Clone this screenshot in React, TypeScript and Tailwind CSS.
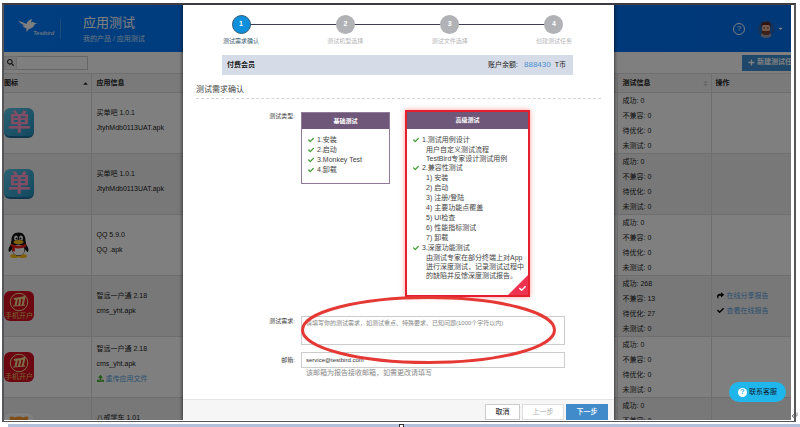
import React, { useState } from "react";
import { FaSearch, FaPlus, FaCheck, FaShare, FaUpload, FaCaretDown, FaCaretUp, FaSort } from "react-icons/fa";

type AppRow = {
  icon: "dan" | "qq" | "cms" | "orange";
  name: string;
  file?: string;
  reupload?: boolean;
  report?: boolean;
  counts: number[];
};

const rows: AppRow[] = [
  { icon: "dan", name: "买单吧 1.0.1", file: "JtyhMdb0113UAT.apk", counts: [0, 0, 0, 0] },
  { icon: "dan", name: "买单吧 1.0.1", file: "JtyhMdb0113UAT.apk", counts: [0, 0, 0, 0] },
  { icon: "qq", name: "QQ 5.9.0", file: "QQ .apk", counts: [0, 0, 0, 0] },
  { icon: "cms", name: "智远一户通 2.18", file: "cms_yht.apk", report: true, counts: [268, 13, 27, 0] },
  { icon: "cms", name: "智远一户通 2.18", file: "cms_yht.apk", reupload: true, counts: [0, 0, 0, 0] },
  { icon: "orange", name: "八戒学车 1.01", counts: [0, 0] },
];

const countLabels = ["成功", "不兼容", "待优化", "未测试"];
const steps = ["测试需求确认", "测试机型选择", "测试文件选择", "创建测试任务"];
const basicItems = ["1.安装", "2.启动", "3.Monkey Test", "4.卸载"];
const compatItems = ["安装", "启动", "注册/登陆", "主要功能点覆盖", "UI检查", "性能指标测试", "卸载"];

const App = () => {
  const [email, setEmail] = useState("service@testbird.com");
  const [demand, setDemand] = useState("");
  const [keyword, setKeyword] = useState("");

  return (
    <div className="flex h-screen flex-col overflow-hidden bg-white pt-[3px] font-['Liberation_Sans','Noto_Sans_CJK_SC',sans-serif] text-[7px] text-[#222]">
      <div className="relative ml-0.5 mr-1 min-h-0 flex-1 border-2 border-b border-[#55555a] border-t-[#3c3c42] pb-px pr-[3px]">
        <div className="relative h-full overflow-hidden bg-white">
          <Header />
          <div className="flex h-[21px] items-center justify-between">
            <label className="flex h-[14px] items-center">
              <span className="flex h-full w-[13px] items-center justify-center border border-[#ddd] bg-[#eee]">
                <FaSearch />
              </span>
              <input
                aria-label="搜索"
                className="h-full w-[71px] border border-l-0 border-[#ccc] px-1"
                value={keyword}
                onChange={(e) => setKeyword(e.target.value)}
              />
            </label>
            <button className="flex h-4 w-[49px] items-center gap-0.5 overflow-hidden whitespace-nowrap bg-[#3d8fd4] pl-1.5 font-bold text-white">
              <FaPlus className="shrink-0" />
              新建测试任务
            </button>
          </div>
          <AppTable />

          <div className="absolute inset-0 bg-black/50" />
          <div className="absolute inset-0 flex justify-center pl-0.5">
            <div role="dialog" aria-label="测试需求确认" className="flex h-full w-[431px] flex-col bg-white shadow-[0_0_3px_1px_rgba(0,0,0,0.5)]">
              <div className="min-h-0 flex-1 pt-2.5">
                <div className="ml-[39px] mr-[41px]">
                  <Steps />
                  <div className="mt-[9px] flex h-5 items-center justify-between bg-[#d6dce7] pl-[5px] pr-[7px]">
                    <strong>付费会员</strong>
                    <span className="flex items-center">
                      账户余额:
                      <span className="ml-1.5 mr-1 text-[8px] text-[#4a8ed0]">888430</span>
                      T币
                    </span>
                  </div>
                </div>
                <h2 className="mx-[13px] flex h-6 items-center border-b border-dashed border-[#d5d5d5] pt-1.5 text-[8px] text-[#444]">测试需求确认</h2>

                <form className="mt-[13px] grid grid-cols-[112px_1fr] gap-x-1.5 pr-[49px]" onSubmit={(e) => e.preventDefault()}>
                  <span className="text-right text-[6px] leading-[8px] text-[#444]">测试类型:</span>
                  <div className="flex items-start gap-[17px]">
                    <BasicCard />
                    <AdvancedCard />
                  </div>

                  <label htmlFor="demand" className="mt-[21px] text-right text-[6px] leading-[10px] text-[#444]">
                    测试需求:
                  </label>
                  <div className="relative mt-[21px]">
                    <textarea
                      id="demand"
                      className="block h-[29px] w-full resize-none border border-[#ccc] px-1 py-0.5 text-[6px] leading-[9px] placeholder:text-[#888]"
                      placeholder="请填写你的测试需求，如测试重点、特殊要求、已知问题(1000个字符以内)"
                      value={demand}
                      onChange={(e) => setDemand(e.target.value)}
                    />
                    <svg className="pointer-events-none absolute -top-5 left-0 h-[68px] w-[255px]" viewBox="0 0 255 68" fill="none">
                      <ellipse cx="127.5" cy="34" rx="126" ry="32.5" stroke="#e53935" strokeWidth="3" />
                    </svg>
                  </div>

                  <label htmlFor="email" className="mt-[7px] text-right text-[6px] leading-4 text-[#444]">
                    邮箱:
                  </label>
                  <div className="mt-[7px]">
                    <input
                      id="email"
                      type="email"
                      className="block h-4 w-full border border-[#ccc] px-1 text-[6px] text-[#333]"
                      value={email}
                      onChange={(e) => setEmail(e.target.value)}
                    />
                    <p className="pl-[5px] leading-[9px] text-[#888]">该邮箱为报告接收邮箱，如需更改请填写</p>
                  </div>
                </form>
              </div>
              <div className="flex h-[21px] shrink-0 items-end justify-end gap-0.5 border-t border-[#e5e5e5] bg-[#f6f6f6] pr-1.5">
                <button className="h-4 w-[35px] border border-[#ccc] bg-white font-medium text-[#333]">取消</button>
                <button disabled className="h-4 w-[42px] border border-[#ddd] bg-white text-[#aaa]">
                  上一步
                </button>
                <button className="h-4 w-[42px] bg-[#428bca] font-medium text-white">下一步</button>
              </div>
            </div>
          </div>

          <button className="absolute bottom-[18px] right-[5px] flex h-5 w-[57px] items-center justify-center gap-0.5 rounded-full bg-[#1fb6ec] text-[#123]">
            <span className="flex size-[9px] items-center justify-center rounded-full bg-white font-bold text-[#1fb6ec]">?</span>
            联系客服
          </button>
        </div>
        <svg className="absolute -right-1 bottom-0.5 size-[7px]" viewBox="0 0 14 14" fill="none" stroke="#666" strokeWidth="1.5">
          <path d="M12 1 V8 H2 M6 4 L2 8 L6 12" />
        </svg>
      </div>
      <div className="ml-2 mt-0.5 flex h-[3px] shrink-0 justify-center bg-[#b3c0d9]">
        <span className="mr-1.5 w-[5px] border border-b-0 border-[#333] bg-white" />
      </div>
    </div>
  );
};

const Header = () => (
  <header className="flex h-[47px] items-center bg-linear-to-r from-[#007cff] to-[#0070f0] text-white">
    <div className="relative ml-3.5 h-5 w-[43px] border-r border-[#3c96f5]">
      <svg className="h-[13px] w-[20px]" viewBox="0 0 40 26" fill="#fff">
        <path d="M1 3 L17 10 C18 5 22 2 28 0 L26 7 C29 5 32 6 33 8 L39 9 L33 11 C31 17 26 19 22 20 L17 26 L17 19 C12 17 10 15 9 13 L14 13 C9 11 5 9 1 3 Z" />
      </svg>
      <span className="absolute bottom-0.5 left-[15px] text-[6px] italic leading-[7px]">Testbird</span>
    </div>
    <div className="ml-[22px]">
      <h1 className="text-[13px] leading-[18px]">应用测试</h1>
      <nav className="mt-0.5 leading-[10px] text-[#d8e8ff]">
        <a href="#products">我的产品</a> / <a href="#test">应用测试</a>
      </nav>
    </div>
    <div className="ml-auto mr-[7px] flex items-center">
      <button aria-label="帮助" className="flex size-3 items-center justify-center rounded-full border border-white text-[8px] leading-none">
        ?
      </button>
      <svg className="ml-3 size-[18px]" viewBox="0 0 36 36">
        <circle cx="18" cy="18" r="17" fill="#2466b8" />
        <path d="M7 32 C8 26 12 25 18 25 C24 25 28 26 29 32 C23 37 13 37 7 32 Z" fill="#9a9fb0" />
        <rect x="10" y="9" width="16" height="18" rx="6" fill="#f0b090" />
        <path d="M8 14 C7 5 13 3 18 4 C25 2 29 7 27 14 L25 10 L11 10 Z" fill="#5a2c22" />
        <path d="M10 21 L14 22 L22 22 L26 21 C27 29 23 30 18 30 C13 30 9 29 10 21 Z" fill="#7a4030" />
        <rect x="13" y="15" width="3" height="2" fill="#222" />
        <rect x="20" y="15" width="3" height="2" fill="#222" />
      </svg>
      <FaCaretDown className="ml-0.5" />
    </div>
  </header>
);

const AppTable = () => (
  <table className="w-full table-fixed border-collapse">
    <colgroup>
      <col className="w-[87px]" />
      <col />
      <col className="w-[94px]" />
      <col className="w-[80px]" />
    </colgroup>
    <thead>
      <tr className="h-[19px] border-y border-[#ddd] bg-[#f4f4f4] text-left">
        <th>
          <span className="flex items-center justify-between pr-0.5">
            图标 <FaCaretUp />
          </span>
        </th>
        <th className="border-l border-[#ddd] pl-[5px]">应用信息</th>
        <th className="border-l border-[#ddd] pl-[5px]">
          <span className="flex items-center justify-between pr-0.5">
            测试信息 <FaSort className="text-[#ccc]" />
          </span>
        </th>
        <th className="border-l border-[#ddd] pl-1">操作</th>
      </tr>
    </thead>
    <tbody>
      {rows.map((row, index) => (
        <tr key={index} className="h-[61px] border-b border-[#ddd] odd:bg-white even:bg-[#f1f1f1]">
          <td>
            <AppIcon kind={row.icon} />
          </td>
          <td className="border-l border-[#ddd] pb-[7px] pl-[5px] leading-[15px]">
            <p>{row.name}</p>
            <p className="min-h-[15px]">{row.file}</p>
            {row.reupload && (
              <a href="#upload" className="flex items-center gap-0.5 text-[#5a9fe0]">
                <FaUpload className="text-[#4caf32]" />
                重传应用文件
              </a>
            )}
          </td>
          <td className="border-l border-[#ddd] pl-[5px] align-top leading-[15px]">
            {row.counts.map((count, i) => (
              <p key={i}>
                {countLabels[i]}: {count}
              </p>
            ))}
          </td>
          <td className="border-l border-[#ddd] pb-[7px] pl-[5px] leading-[15px]">
            {row.report && (
              <>
                <a href="#share" className="flex items-center gap-[3px] text-[#5a9fe0]">
                  <FaShare className="text-black" />
                  在线分享报告
                </a>
                <a href="#report" className="flex items-center gap-[3px] text-[#5a9fe0]">
                  <FaCheck className="text-black" />
                  查看在线报告
                </a>
              </>
            )}
          </td>
        </tr>
      ))}
    </tbody>
  </table>
);

const AppIcon = ({ kind }: { kind: AppRow["icon"] }) => {
  if (kind === "dan") {
    return (
      <div className="flex size-[30px] items-center justify-center rounded-md border-b-2 border-[#1d6f9c] bg-linear-to-br from-[#58c4e4] to-[#2492c0] text-[23px] font-bold leading-none text-[#ff9ccb]">
        单
      </div>
    );
  }
  if (kind === "cms") {
    return (
      <div className="flex size-[30px] flex-col items-center rounded-md bg-[#d80f24] pt-px text-[7px] leading-[8px] text-[#f0c060]">
        <svg className="size-5" viewBox="0 0 40 40" fill="none" stroke="#f8dc90">
          <circle cx="20" cy="20" r="17.5" strokeWidth="2" />
          <path d="M10 14 L16 13 L13 27 M18 13 L23 12 L20 27 M25 12 L31 10 L27 27" strokeWidth="4" />
          <path d="M8 28 L32 26" strokeWidth="2" />
        </svg>
        手机开户
      </div>
    );
  }
  if (kind === "orange") {
    return (
      <div className="flex size-[30px] justify-center rounded-md bg-white pt-[3px] shadow-[0_0_1px_#bbb]">
        <svg className="size-[22px]" viewBox="0 0 44 44" fill="#ff9a2e">
          <path d="M3 2 C7 0 11 1 13 3 C19 0 25 0 31 3 C34 1 38 0 41 2 L39 12 L42 24 C40 38 32 42 22 42 C12 42 4 38 2 24 L5 12 Z" />
        </svg>
      </div>
    );
  }
  return (
    <svg className="ml-1 h-[26px] w-[21px]" viewBox="0 0 42 52">
      <path d="M6 25 C1 30 0 36 2 40 C4 40 6 37 8 34 Z M36 25 C41 30 42 36 40 40 C38 40 36 37 34 34 Z" fill="#111" />
      <ellipse cx="13" cy="48" rx="9" ry="4" fill="#ffc01b" />
      <ellipse cx="29" cy="48" rx="9" ry="4" fill="#ffc01b" />
      <path d="M21 1 C11 1 7 8 7 17 C4 26 5 46 21 48 C37 46 38 26 35 17 C35 8 31 1 21 1 Z" fill="#111" />
      <ellipse cx="21" cy="36" rx="12" ry="11" fill="#fff" />
      <ellipse cx="16" cy="12" rx="4" ry="5" fill="#fff" />
      <ellipse cx="26" cy="12" rx="4" ry="5" fill="#fff" />
      <circle cx="17" cy="13" r="2" fill="#111" />
      <circle cx="25" cy="13" r="2" fill="#111" />
      <ellipse cx="21" cy="20" rx="10" ry="4" fill="#ffc01b" />
      <path d="M6 23 C15 29 27 29 36 23 L37 29 C27 34 18 33 14 32 L14 39 L8 38 L9 30 L5 28 Z" fill="#f0231a" />
    </svg>
  );
};

const Steps = () => (
  <ol className="relative flex justify-between">
    <li aria-hidden="true" className="absolute inset-x-[19px] top-[9px] h-px bg-[#3d3d57]" />
    {steps.map((label, index) => (
      <li key={label} className={`relative flex w-[38px] flex-col items-center whitespace-nowrap text-[6px] ${index === 0 ? "text-[#3d6070]" : "text-[#b5b5b5]"}`}>
        <span
          className={`flex size-[19px] items-center justify-center rounded-full text-[7px] font-bold text-white ${
            index === 0 ? "border border-[#2b5a7c] bg-[#0f90dc]" : "bg-[#b0b2b5]"
          }`}
        >
          {index + 1}
        </span>
        <span className="mt-0.5 leading-[10px]">{label}</span>
      </li>
    ))}
  </ol>
);

const CheckedLine = ({ children }: { children: React.ReactNode }) => (
  <p className="flex items-center gap-[3px]">
    <FaCheck className="size-[6px] text-[#3f9c35]" />
    {children}
  </p>
);

const BasicCard = () => (
  <section className="h-[72px] w-[89px] border border-[#8f7b98]">
    <h3 className="bg-[#6f5779] text-center text-[6px] font-bold leading-4 text-white">基础测试</h3>
    <div className="pl-1.5 pt-1.5 leading-[10px] text-[#444]">
      {basicItems.map((item) => (
        <CheckedLine key={item}>{item}</CheckedLine>
      ))}
    </div>
  </section>
);

const AdvancedCard = () => (
  <section className="relative h-[183px] w-[121px] shadow-[0_0_5px_2px_rgba(255,60,60,0.5)] ring-2 ring-[#e3202b]">
    <h3 className="bg-[#6f5779] text-center text-[6px] font-bold leading-[17px] text-white">高级测试</h3>
    <div className="whitespace-nowrap pl-1.5 pt-1.5 leading-[10px] text-[#444]">
      <CheckedLine>1.测试用例设计</CheckedLine>
      <div className="pl-[13px] leading-[9px]">
        <p>用户自定义测试流程</p>
        <p>TestBird专家设计测试用例</p>
      </div>
      <CheckedLine>2.兼容性测试</CheckedLine>
      <div className="pl-[13px]">
        {compatItems.map((item, index) => (
          <p key={item}>
            {index + 1}) {item}
          </p>
        ))}
      </div>
      <CheckedLine>3.深度功能测试</CheckedLine>
      <div className="pl-[13px] leading-[9px]">
        <p>由测试专家在部分终端上对App</p>
        <p>进行深度测试，记录测试过程中</p>
        <p>的缺陷并反馈深度测试报告。</p>
      </div>
    </div>
    <span className="absolute bottom-0 right-0 flex size-5 items-end justify-end bg-[#ee3350] pb-[3px] pr-0.5 text-white [clip-path:polygon(100%_0,100%_100%,0_100%)]">
      <FaCheck className="size-[7px]" />
    </span>
  </section>
);

export default App;
